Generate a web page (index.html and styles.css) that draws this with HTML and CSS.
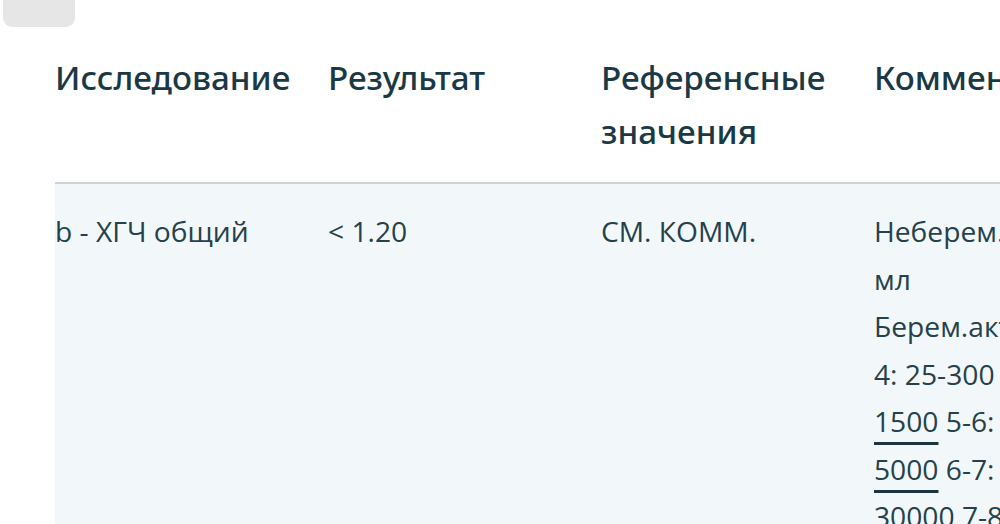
FILE: index.html
```html
<!DOCTYPE html>
<html lang="ru">
<head>
<meta charset="utf-8">
<link rel="stylesheet" href="styles.css">
</head>
<body>
<div class="topbtn"></div>
<div class="wrap">
<table class="results">
<thead>
<tr>
<th>Исследование</th>
<th>Результат</th>
<th>Референсные значения</th>
<th>Комментарий</th>
</tr>
</thead>
<tbody>
<tr>
<td>b - ХГЧ общий</td>
<td>&lt; 1.20</td>
<td>СМ. КОММ.</td>
<td class="comment">Неберем.: 0 - 5 мЕд/<br>мл<br>Берем.акт.нед. 3-<br>4: 25-300 4-5: 100-<br><u>1500</u> 5-6: 500-<br><u>5000</u> 6-7: 4000-<br>30000 7-8: 4500-</td>
</tr>
</tbody>
</table>
</div>
</body>
</html>
```
FILE: styles.css
```css
html, body {
  margin: 0;
  padding: 0;
  overflow: hidden;
  background: #ffffff;
}
body {
  font-family: "Open Sans", "Noto Sans", sans-serif;
  color: #1e3b46;
  width: 1000px;
  height: 524px;
}
.topbtn {
  margin-left: 3px;
  width: 72px;
  height: 27px;
  background: #e6e6e6;
  border-radius: 0 0 9px 9px;
}
.wrap {
  padding-left: 55px;
  padding-top: 24px;
}
.results {
  border-collapse: collapse;
  table-layout: fixed;
  width: 1092px;
}
.results th {
  width: 273px;
  text-align: left;
  vertical-align: top;
  font-family: "Noto Sans", "Open Sans", sans-serif;
  font-weight: 500;
  font-size: 33.2px;
  line-height: 54px;
  padding: 0 16px 23px 0;
  box-sizing: border-box;
  color: #1b3845;
  border-bottom: 2px solid #cfd3d4;
  white-space: normal;
}
.results td {
  vertical-align: top;
  font-size: 28.2px;
  line-height: 47.5px;
  padding: 24px 20px 0 0;
  background: #f2f8f9;
  color: #24414c;
  white-space: nowrap;
}
.results td u {
  text-decoration-thickness: 3px;
  text-underline-offset: 10px;
  text-decoration-color: #1b3440;
}
```
